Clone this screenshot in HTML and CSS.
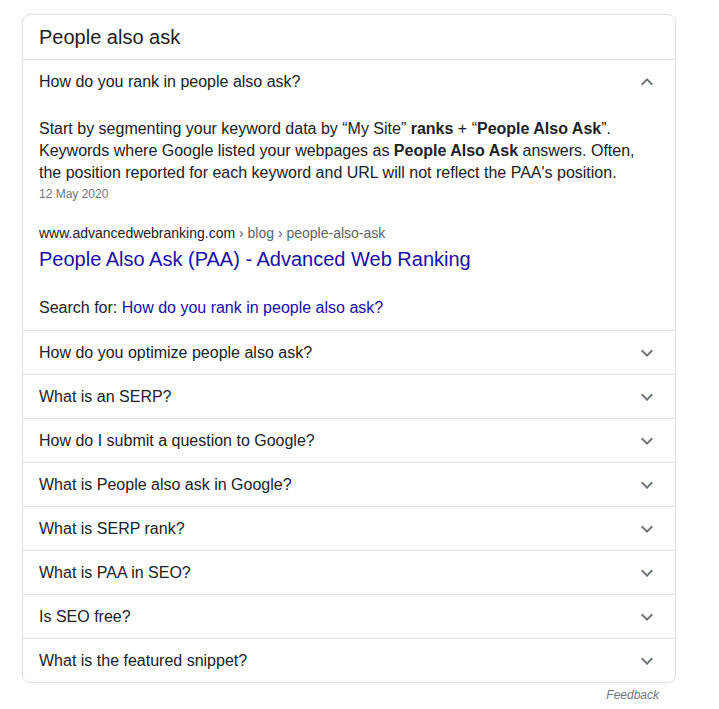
FILE: index.html
```html
<!DOCTYPE html>
<html lang="en">
<head>
    <meta charset="UTF-8">
    <meta name="viewport" content="width=device-width, initial-scale=1.0">
    <title>People also ask</title>
    <link rel="stylesheet" href="styles.css">
</head>
<body>
    <div class="wrap">
        <div class="card">
            <div class="card-head">People also ask</div>

            <div class="item open">
                <div class="question">
                    <span>How do you rank in people also ask?</span>
                    <svg class="chevron up" viewBox="0 0 24 24"><path d="M7.41 8.59L12 13.17l4.59-4.58L18 10l-6 6-6-6 1.41-1.41z"/></svg>
                </div>
                <div class="answer">
                    <p class="snippet">Start by segmenting your keyword data by “My Site” <b>ranks</b> + “<b>People Also Ask</b>”. Keywords where Google listed your webpages as <b>People Also Ask</b> answers. Often, the position reported for each keyword and URL will not reflect the PAA's position.</p>
                    <div class="date">12 May 2020</div>
                    <div class="cite">www.advancedwebranking.com <span>› blog › people-also-ask</span></div>
                    <a class="result-title" href="#">People Also Ask (PAA) - Advanced Web Ranking</a>
                    <div class="search-for">Search for: <a href="#">How do you rank in people also ask?</a></div>
                </div>
            </div>

            <div class="item">
                <div class="question"><span>How do you optimize people also ask?</span><svg class="chevron" viewBox="0 0 24 24"><path d="M7.41 8.59L12 13.17l4.59-4.58L18 10l-6 6-6-6 1.41-1.41z"/></svg></div>
            </div>
            <div class="item">
                <div class="question"><span>What is an SERP?</span><svg class="chevron" viewBox="0 0 24 24"><path d="M7.41 8.59L12 13.17l4.59-4.58L18 10l-6 6-6-6 1.41-1.41z"/></svg></div>
            </div>
            <div class="item">
                <div class="question"><span>How do I submit a question to Google?</span><svg class="chevron" viewBox="0 0 24 24"><path d="M7.41 8.59L12 13.17l4.59-4.58L18 10l-6 6-6-6 1.41-1.41z"/></svg></div>
            </div>
            <div class="item">
                <div class="question"><span>What is People also ask in Google?</span><svg class="chevron" viewBox="0 0 24 24"><path d="M7.41 8.59L12 13.17l4.59-4.58L18 10l-6 6-6-6 1.41-1.41z"/></svg></div>
            </div>
            <div class="item">
                <div class="question"><span>What is SERP rank?</span><svg class="chevron" viewBox="0 0 24 24"><path d="M7.41 8.59L12 13.17l4.59-4.58L18 10l-6 6-6-6 1.41-1.41z"/></svg></div>
            </div>
            <div class="item">
                <div class="question"><span>What is PAA in SEO?</span><svg class="chevron" viewBox="0 0 24 24"><path d="M7.41 8.59L12 13.17l4.59-4.58L18 10l-6 6-6-6 1.41-1.41z"/></svg></div>
            </div>
            <div class="item">
                <div class="question"><span>Is SEO free?</span><svg class="chevron" viewBox="0 0 24 24"><path d="M7.41 8.59L12 13.17l4.59-4.58L18 10l-6 6-6-6 1.41-1.41z"/></svg></div>
            </div>
            <div class="item">
                <div class="question"><span>What is the featured snippet?</span><svg class="chevron" viewBox="0 0 24 24"><path d="M7.41 8.59L12 13.17l4.59-4.58L18 10l-6 6-6-6 1.41-1.41z"/></svg></div>
            </div>
        </div>
        <div class="feedback">Feedback</div>
    </div>
</body>
</html>
```

FILE: styles.css
```css
body {
    font-family: "Liberation Sans", Arial, sans-serif;
    margin: 0;
    padding: 14px 0 0 22px;
    background: #fff;
    color: #202124;
}
.wrap {
    width: 654px;
}
.card {
    border: 1px solid #dfe1e5;
    border-radius: 8px;
    overflow: hidden;
}
.card-head {
    height: 44px;
    line-height: 44px;
    padding: 0 16px;
    font-size: 20px;
    border-bottom: 1px solid #dfe1e5;
}
.item {
    border-bottom: 1px solid #dfe1e5;
}
.item:last-child {
    border-bottom: none;
}
.question {
    height: 43px;
    padding: 0 16px;
    display: flex;
    align-items: center;
    justify-content: space-between;
    font-size: 16px;
}
.chevron {
    width: 24px;
    height: 24px;
    fill: #70757a;
}
.chevron.up {
    transform: rotate(180deg);
}
.answer {
    padding: 15px 16px 11px;
}
.snippet {
    margin: 0;
    font-size: 16px;
    line-height: 22px;
}
.date {
    font-size: 12px;
    line-height: 16px;
    color: #70757a;
    margin-top: 2px;
}
.cite {
    margin-top: 20px;
    font-size: 14px;
    line-height: 22px;
    color: #202124;
}
.cite span {
    color: #5f6368;
}
.result-title {
    display: block;
    margin-top: 2px;
    font-size: 20px;
    line-height: 26px;
    color: #1a0dab;
    text-decoration: none;
}
.search-for {
    margin-top: 25px;
    font-size: 16px;
    line-height: 22px;
}
.search-for a {
    color: #1a0dab;
    text-decoration: none;
}
.feedback {
    text-align: right;
    padding-right: 17px;
    margin-top: 5px;
    font-size: 12px;
    font-style: italic;
    color: #70757a;
}
```
